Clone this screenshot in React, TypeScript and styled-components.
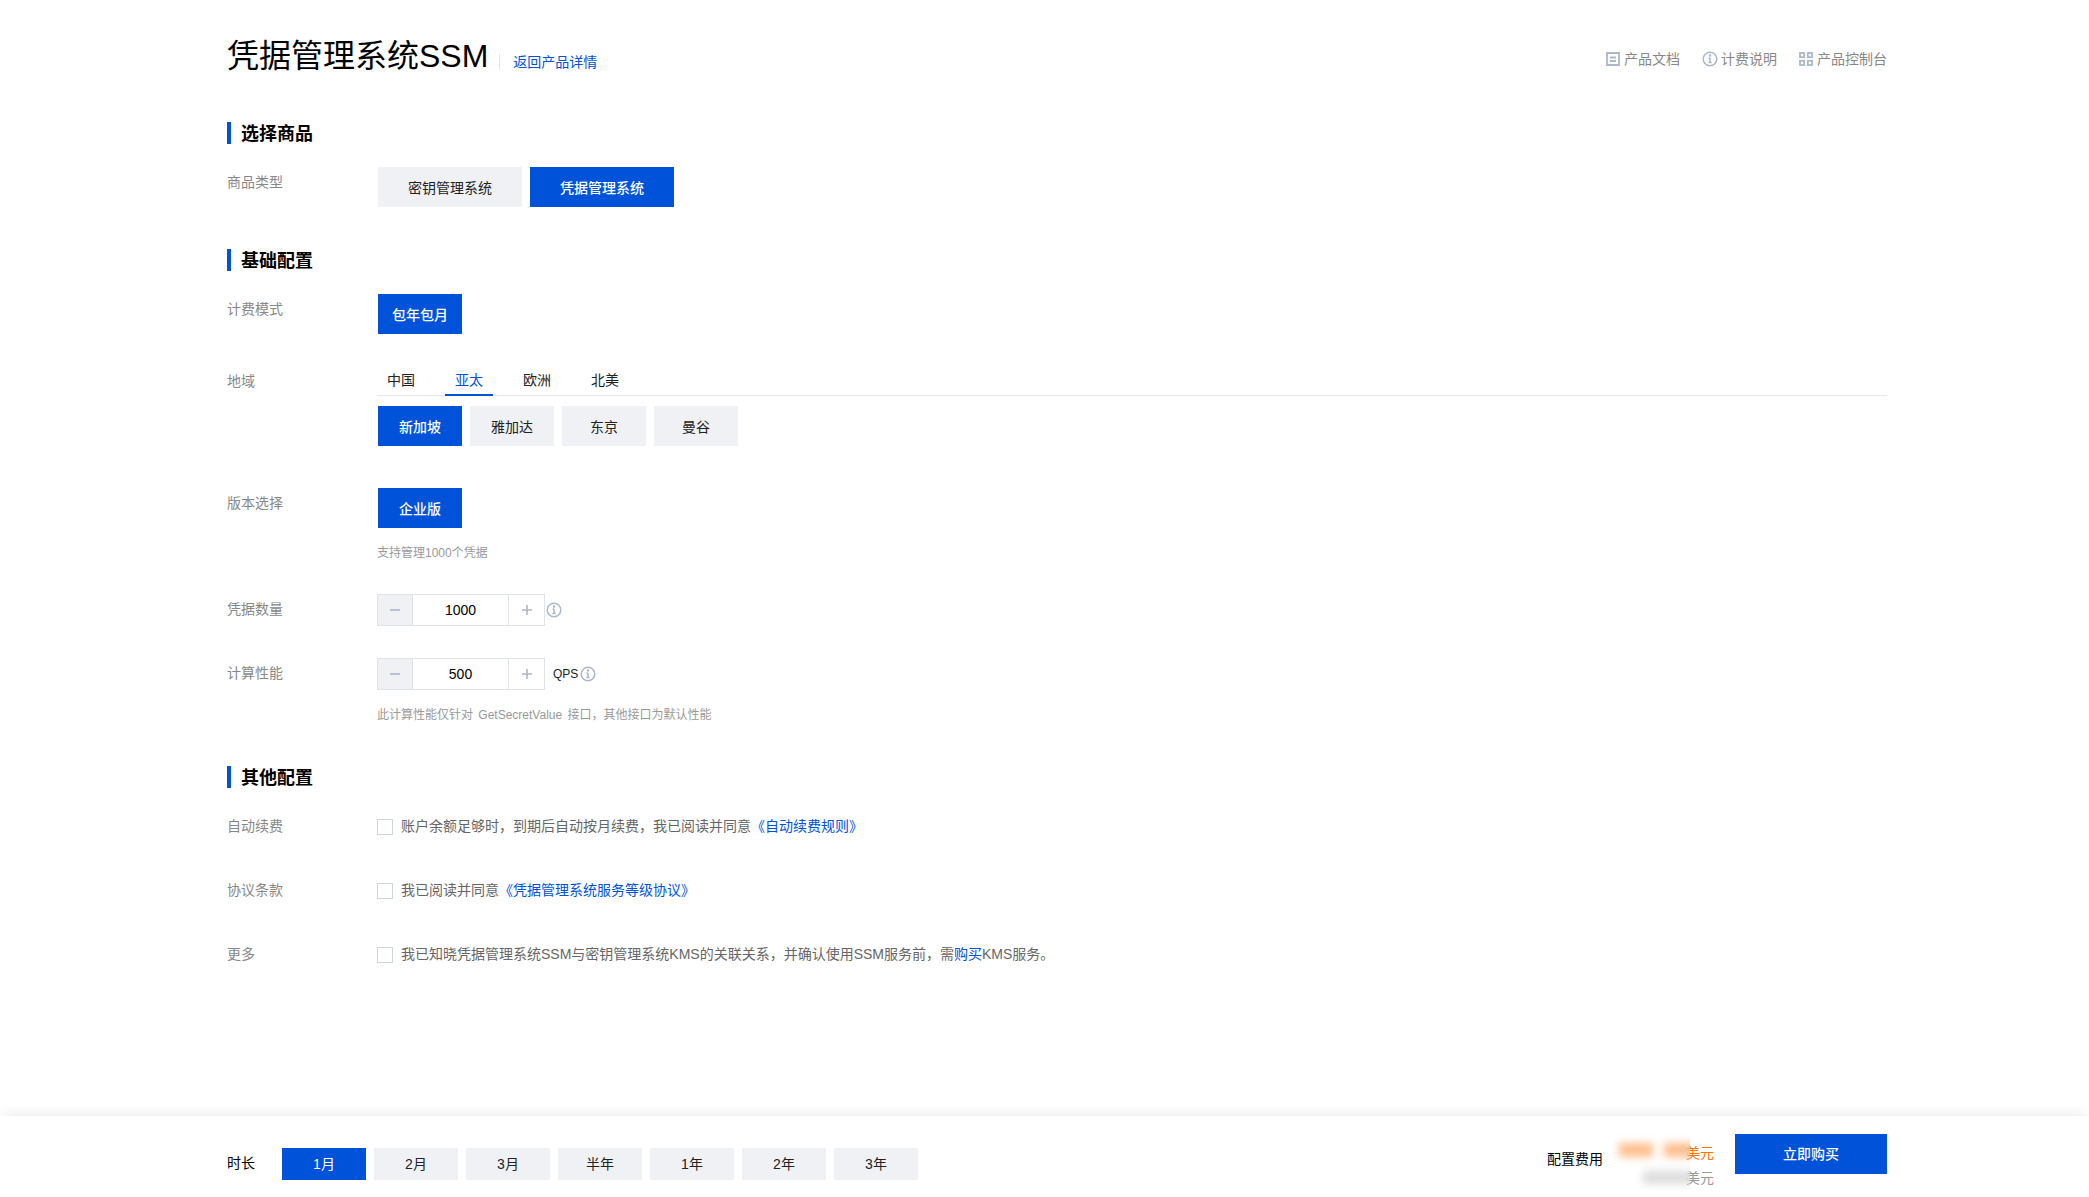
import React from 'react';
import styled, { createGlobalStyle } from 'styled-components';

const GlobalStyle = createGlobalStyle`
  html, body {
    margin: 0;
    padding: 0;
    background: #fff;
  }
  body {
    font-family: "Liberation Sans", "Noto Sans CJK SC", sans-serif;
    font-size: 14px;
    color: #000;
  }
  * {
    box-sizing: border-box;
  }
`;

const BLUE = '#0052d9';

const Page = styled.div`
  min-height: 1197px;
  display: flex;
  flex-direction: column;
`;

const Main = styled.main`
  flex: 1;
  padding: 0 202px 0 227px;
`;

const Header = styled.header`
  display: flex;
  justify-content: space-between;
  align-items: flex-start;
  padding-top: 36px;
  height: 122px;
`;

const TitleGroup = styled.div`
  display: flex;
  align-items: flex-start;
`;

const Title = styled.h1`
  margin: 0;
  font-size: 32px;
  line-height: 40px;
  font-weight: 400;
  color: #000;
`;

const BackLink = styled.a`
  margin: 18px 0 0 11px;
  padding-left: 13px;
  border-left: 1px solid #dfe3ea;
  font-size: 14px;
  line-height: 16px;
  color: ${BLUE};
  text-decoration: none;
`;

const TopNav = styled.nav`
  display: flex;
  gap: 22px;
  padding-top: 13px;
`;

const TopLink = styled.a<{ $gap?: number }>`
  display: flex;
  align-items: center;
  gap: ${(p) => p.$gap ?? 4}px;
  font-size: 14px;
  line-height: 20px;
  color: #888;
  text-decoration: none;
`;

const Section = styled.section`
  margin-bottom: 42px;
`;

const SectionTitle = styled.h2`
  margin: 0 0 23px;
  height: 22px;
  border-left: 4px solid ${BLUE};
  padding-left: 10px;
  font-size: 18px;
  line-height: 24px;
  font-weight: 700;
  color: #000;
`;

const Rows = styled.div`
  display: flex;
  flex-direction: column;
  gap: 32px;
`;

const Row = styled.div<{ $extra?: number }>`
  display: grid;
  grid-template-columns: 150px 1fr;
  margin-bottom: ${(p) => p.$extra ?? 0}px;
`;

const Label = styled.div`
  font-size: 14px;
  line-height: 30px;
  color: #888;
`;

const Options = styled.div<{ $top?: number }>`
  display: flex;
  gap: 8px;
  padding-left: 1px;
  margin-top: ${(p) => p.$top ?? 0}px;
`;

const Option = styled.button<{ $active?: boolean; $wide?: boolean }>`
  width: ${(p) => (p.$wide ? 144 : 84)}px;
  height: 40px;
  padding: 0;
  border: 0;
  border-radius: 0;
  background: ${(p) => (p.$active ? BLUE : '#f0f1f5')};
  color: ${(p) => (p.$active ? '#fff' : '#222')};
  font-family: inherit;
  font-size: 14px;
  font-weight: ${(p) => (p.$active ? 500 : 400)};
`;

const Tabs = styled.div`
  display: flex;
  gap: 20px;
  height: 30px;
  border-bottom: 1px solid #e5e8ee;
`;

const Tab = styled.div<{ $active?: boolean }>`
  width: 48px;
  height: 30px;
  text-align: center;
  font-size: 14px;
  line-height: 28px;
  color: ${(p) => (p.$active ? BLUE : '#222')};
  border-bottom: 2px solid ${(p) => (p.$active ? BLUE : 'transparent')};
`;

const Hint = styled.div`
  margin-top: 16px;
  font-size: 12px;
  line-height: 18px;
  word-spacing: 2px;
  color: #999;
`;

const StepperLine = styled.div`
  display: flex;
  align-items: center;
  height: 32px;
`;

const Stepper = styled.div`
  display: flex;
  width: 168px;
  height: 32px;
  border: 1px solid #dfe3ea;
`;

const StepButton = styled.button<{ $disabled?: boolean }>`
  flex: none;
  width: ${(p) => (p.$disabled ? 34 : 35)}px;
  padding: 0;
  border: 0;
  display: flex;
  align-items: center;
  justify-content: center;
  background: ${(p) => (p.$disabled ? '#f0f1f5' : '#fff')};
  color: #a9b4c3;
`;

const StepInput = styled.input`
  flex: 1;
  min-width: 0;
  padding: 0;
  border: 0;
  border-left: 1px solid #dfe3ea;
  border-right: 1px solid #dfe3ea;
  outline: 0;
  text-align: center;
  font-family: inherit;
  font-size: 14px;
  color: #000;
`;

const Unit = styled.span`
  margin-left: 8px;
  font-size: 12px;
  color: #222;
`;

const InfoWrap = styled.span<{ $gap: number }>`
  display: flex;
  margin-left: ${(p) => p.$gap}px;
`;

const CheckLine = styled.label`
  display: flex;
  align-items: center;
  height: 32px;
  font-size: 14px;
  color: #666;
`;

const CheckText = styled.span`
  line-height: 20px;
  margin-top: -2px;
`;

const Check = styled.input.attrs({ type: 'checkbox' })`
  appearance: none;
  flex: none;
  width: 16px;
  height: 16px;
  margin: 0 8px 0 0;
  border: 1px solid #cfd5de;
  background: #fff;
`;

const TextLink = styled.a`
  color: ${BLUE};
  text-decoration: none;
`;

const Footer = styled.footer`
  flex: none;
  height: 81px;
  padding: 0 202px 0 227px;
  display: flex;
  justify-content: space-between;
  align-items: flex-start;
  background: #fff;
  box-shadow: 0 -6px 12px -4px rgba(54, 58, 80, 0.1);
`;

const DurationGroup = styled.div`
  display: flex;
  align-items: center;
  margin-top: 32px;
`;

const DurationLabel = styled.span`
  width: 55px;
  font-size: 14px;
  line-height: 30px;
  margin-bottom: 2px;
  color: #000;
`;

const Durations = styled.div`
  display: flex;
  gap: 8px;
`;

const Duration = styled.button<{ $active?: boolean }>`
  width: 84px;
  height: 32px;
  padding: 0 0 2px;
  border: 0;
  background: ${(p) => (p.$active ? BLUE : '#f0f1f5')};
  color: ${(p) => (p.$active ? '#fff' : '#222')};
  font-family: inherit;
  font-size: 14px;
`;

const Checkout = styled.div`
  display: flex;
  align-items: flex-start;
  margin-top: 18px;
`;

const CostLabel = styled.span`
  margin-top: 13px;
  font-size: 14px;
  line-height: 24px;
  color: #000;
`;

const PriceColumn = styled.div`
  position: relative;
  width: 111px;
  height: 60px;
  display: flex;
  flex-direction: column;
  align-items: flex-end;
  font-size: 14px;
  line-height: 25px;
  padding-top: 7px;
`;

const PriceMain = styled.span`
  color: #ff7200;
`;

const PriceSub = styled.span`
  color: #999;
`;

/* the amounts are smudged out in the picture, the smudge stops hard at its right edge */
const BlurPatch = styled.div`
  position: absolute;
  left: 4px;
  top: -4px;
  width: 83px;
  height: 60px;
  overflow: hidden;
`;

const BlurBlob = styled.span<{ $left: number; $top: number; $width: number; $height: number; $color: string }>`
  position: absolute;
  left: ${(p) => p.$left}px;
  top: ${(p) => p.$top}px;
  width: ${(p) => p.$width}px;
  height: ${(p) => p.$height}px;
  background: ${(p) => p.$color};
  filter: blur(4px);
`;

const BuyButton = styled.button`
  width: 152px;
  height: 40px;
  margin-left: 21px;
  padding: 0 0 2px;
  border: 0;
  background: ${BLUE};
  color: #fff;
  font-family: inherit;
  font-size: 14px;
  font-weight: 500;
`;

const DocIcon = () => (
  <svg width="14" height="14" viewBox="0 0 14 14" fill="none" stroke="#adb7c6" strokeWidth="1.8">
    <path d="M1 1h12v12H1z" />
    <path d="M4 5.5h6M4 9h6" />
  </svg>
);

const InfoIcon = () => (
  <svg width="16" height="16" viewBox="0 0 16 16" fill="none" stroke="#adb7c6" strokeWidth="1.5">
    <circle cx="8" cy="8" r="6.8" />
    <path d="M8 7v4.6M6.6 7H8M6.4 11.6h3.2" />
    <circle cx="8" cy="4.6" r="0.5" fill="#adb7c6" />
  </svg>
);

const GridIcon = () => (
  <svg width="14" height="14" viewBox="0 0 14 14" fill="none" stroke="#adb7c6" strokeWidth="1.8">
    <rect x="1" y="1" width="4.2" height="4.2" />
    <rect x="8.8" y="1" width="4.2" height="4.2" />
    <rect x="1" y="8.8" width="4.2" height="4.2" />
    <rect x="8.8" y="8.8" width="4.2" height="4.2" />
  </svg>
);

const MinusIcon = () => (
  <svg width="10" height="10" viewBox="0 0 10 10" stroke="#adb7c6" strokeWidth="1.6">
    <path d="M0 5h10" />
  </svg>
);

const PlusIcon = () => (
  <svg width="10" height="10" viewBox="0 0 10 10" stroke="#adb7c6" strokeWidth="1.6">
    <path d="M0 5h10M5 0v10" />
  </svg>
);

const regions = ['新加坡', '雅加达', '东京', '曼谷'];
const tabs = ['中国', '亚太', '欧洲', '北美'];
const durations = ['1月', '2月', '3月', '半年', '1年', '2年', '3年'];

const StepperField: React.FC<{ value: string }> = ({ value }) => (
  <Stepper>
    <StepButton $disabled>
      <MinusIcon />
    </StepButton>
    <StepInput value={value} readOnly />
    <StepButton>
      <PlusIcon />
    </StepButton>
  </Stepper>
);

const App: React.FC = () => {
  return (
    <Page>
      <GlobalStyle />
      <Main>
        <Header>
          <TitleGroup>
            <Title>凭据管理系统SSM</Title>
            <BackLink href="#">返回产品详情</BackLink>
          </TitleGroup>
          <TopNav>
            <TopLink href="#"><DocIcon />产品文档</TopLink>
            <TopLink href="#" $gap={3}><InfoIcon />计费说明</TopLink>
            <TopLink href="#"><GridIcon />产品控制台</TopLink>
          </TopNav>
        </Header>

        <Section>
          <SectionTitle>选择商品</SectionTitle>
          <Rows>
            <Row>
              <Label>商品类型</Label>
              <Options>
                <Option $wide>密钥管理系统</Option>
                <Option $wide $active>凭据管理系统</Option>
              </Options>
            </Row>
          </Rows>
        </Section>

        <Section>
          <SectionTitle>基础配置</SectionTitle>
          <Rows>
            <Row>
              <Label>计费模式</Label>
              <Options>
                <Option $active>包年包月</Option>
              </Options>
            </Row>
            <Row $extra={10}>
              <Label>地域</Label>
              <div>
                <Tabs>
                  {tabs.map((t) => (
                    <Tab key={t} $active={t === '亚太'}>{t}</Tab>
                  ))}
                </Tabs>
                <Options $top={10}>
                  {regions.map((r) => (
                    <Option key={r} $active={r === '新加坡'}>{r}</Option>
                  ))}
                </Options>
              </div>
            </Row>
            <Row>
              <Label>版本选择</Label>
              <div>
                <Options>
                  <Option $active>企业版</Option>
                </Options>
                <Hint>支持管理1000个凭据</Hint>
              </div>
            </Row>
            <Row>
              <Label>凭据数量</Label>
              <StepperLine>
                <StepperField value="1000" />
                <InfoWrap $gap={1}><InfoIcon /></InfoWrap>
              </StepperLine>
            </Row>
            <Row>
              <Label>计算性能</Label>
              <div>
                <StepperLine>
                  <StepperField value="500" />
                  <Unit>QPS</Unit>
                  <InfoWrap $gap={2}><InfoIcon /></InfoWrap>
                </StepperLine>
                <Hint>此计算性能仅针对 GetSecretValue 接口，其他接口为默认性能</Hint>
              </div>
            </Row>
          </Rows>
        </Section>

        <Section>
          <SectionTitle>其他配置</SectionTitle>
          <Rows>
            <Row>
              <Label>自动续费</Label>
              <CheckLine>
                <Check />
                <CheckText>账户余额足够时，到期后自动按月续费，我已阅读并同意<TextLink href="#">《自动续费规则》</TextLink></CheckText>
              </CheckLine>
            </Row>
            <Row>
              <Label>协议条款</Label>
              <CheckLine>
                <Check />
                <CheckText>我已阅读并同意<TextLink href="#">《凭据管理系统服务等级协议》</TextLink></CheckText>
              </CheckLine>
            </Row>
            <Row>
              <Label>更多</Label>
              <CheckLine>
                <Check />
                <CheckText>我已知晓凭据管理系统SSM与密钥管理系统KMS的关联关系，并确认使用SSM服务前，需<TextLink href="#">购买</TextLink>KMS服务。</CheckText>
              </CheckLine>
            </Row>
          </Rows>
        </Section>
      </Main>

      <Footer>
        <DurationGroup>
          <DurationLabel>时长</DurationLabel>
          <Durations>
            {durations.map((d) => (
              <Duration key={d} $active={d === '1月'}>{d}</Duration>
            ))}
          </Durations>
        </DurationGroup>
        <Checkout>
          <CostLabel>配置费用</CostLabel>
          <PriceColumn>
            <PriceMain>美元</PriceMain>
            <PriceSub>美元</PriceSub>
            <BlurPatch>
              <BlurBlob $left={12} $top={13} $width={34} $height={14} $color="#ffbd8c" />
              <BlurBlob $left={57} $top={13} $width={32} $height={14} $color="#ffbd8c" />
              <BlurBlob $left={36} $top={41} $width={56} $height={13} $color="#dcdcdc" />
            </BlurPatch>
          </PriceColumn>
          <BuyButton>立即购买</BuyButton>
        </Checkout>
      </Footer>
    </Page>
  );
};

export default App;
